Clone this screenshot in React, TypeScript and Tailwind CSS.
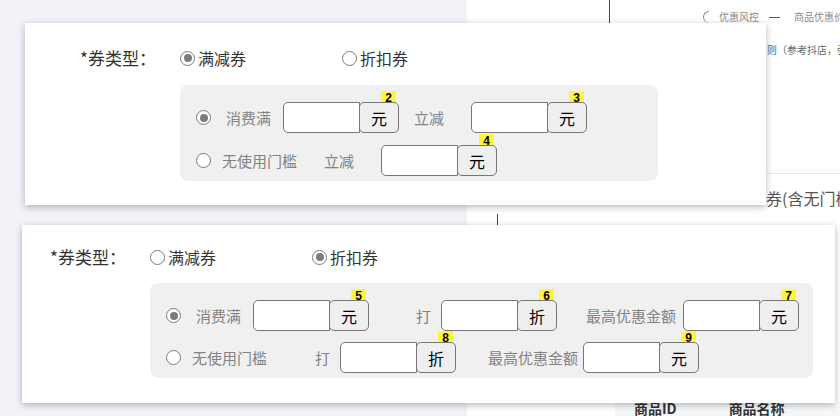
import React from "react";

const CJK = "font-['Noto_Sans_CJK_SC','Noto_Sans',sans-serif]";

function Radio({ on }: { on?: boolean }) {
  return (
    <span className="flex h-[15px] w-[15px] shrink-0 items-center justify-center rounded-full border border-[#7b7b7b] bg-white">
      {on && <span className="h-[8px] w-[8px] rounded-full bg-[#7b7b7b]" />}
    </span>
  );
}

// input + unit button, with the yellow hint tag peeking over the button
function Field({ unit, hint, ml }: { unit: string; hint: string; ml: string }) {
  return (
    <div className={`relative flex h-[31px] shrink-0 ${ml}`}>
      <div className="h-full w-[77px] rounded-l-[5px] border border-[#767676] bg-white" />
      <span className="absolute right-[3px] top-[-11px] z-0 h-[14px] w-[15px] bg-[#fff53c] text-center font-['Liberation_Sans',sans-serif] text-[12px] font-bold leading-[15px] text-black">
        {hint}
      </span>
      <div className="relative z-10 -ml-px flex h-full w-[40px] items-center justify-center rounded-[5px] border border-[#767676] bg-[#efefef] text-[16px] text-black">
        {unit}
      </div>
    </div>
  );
}

function Label({ text, ml }: { text: string; ml: string }) {
  return <span className={`shrink-0 whitespace-nowrap text-[15px] leading-[20px] text-[#838383] ${ml}`}>{text}</span>;
}

function TypeRow({ first, ml, mt }: { first: boolean; ml: string; mt: string }) {
  return (
    <div className={`flex h-[24px] items-center text-[16px] text-[#333] ${mt}`}>
      <span className={`w-[100px] shrink-0 whitespace-nowrap text-[17px] ${ml}`}>*券类型：</span>
      <Radio on={first} />
      <span className="ml-[3px] w-[48px] whitespace-nowrap">满减券</span>
      <span className="ml-[96px]">
        <Radio on={!first} />
      </span>
      <span className="ml-[3px] whitespace-nowrap">折扣券</span>
    </div>
  );
}

function CardOne() {
  return (
    <div className="absolute left-[25px] top-[23px] z-20 h-[182px] w-[741px] bg-white shadow-[0_2px_7px_rgba(0,0,0,0.28)]">
      <TypeRow first ml="ml-[55px]" mt="mt-[23px]" />
      <div className="ml-[155px] mt-[15px] h-[96px] w-[478px] rounded-[8px] bg-[#f0f0f0] pt-[17px]">
        <div className="flex h-[31px] items-center">
          <span className="ml-[16px]"><Radio on /></span>
          <Label text="消费满" ml="ml-[15px]" />
          <Field unit="元" hint="2" ml="ml-[12px]" />
          <Label text="立减" ml="ml-[15px]" />
          <Field unit="元" hint="3" ml="ml-[27px]" />
        </div>
        <div className="mt-[12px] flex h-[31px] items-center">
          <span className="ml-[16px]"><Radio /></span>
          <Label text="无使用门槛" ml="ml-[11px]" />
          <Label text="立减" ml="ml-[27px]" />
          <Field unit="元" hint="4" ml="ml-[27px]" />
        </div>
      </div>
    </div>
  );
}

function CardTwo() {
  return (
    <div className="absolute left-[22px] top-[225px] z-20 h-[178px] w-[813px] bg-white shadow-[0_2px_7px_rgba(0,0,0,0.28)]">
      <TypeRow first={false} ml="ml-[28px]" mt="mt-[20px]" />
      <div className="ml-[128px] mt-[14px] h-[95px] w-[663px] rounded-[8px] bg-[#f0f0f0] pt-[17px]">
        <div className="flex h-[31px] items-center">
          <span className="ml-[16px]"><Radio on /></span>
          <Label text="消费满" ml="ml-[15px]" />
          <Field unit="元" hint="5" ml="ml-[12px]" />
          <Label text="打" ml="ml-[47px]" />
          <Field unit="折" hint="6" ml="ml-[10px]" />
          <Label text="最高优惠金额" ml="ml-[29px]" />
          <Field unit="元" hint="7" ml="ml-[7px]" />
        </div>
        <div className="mt-[11px] flex h-[31px] items-center">
          <span className="ml-[16px]"><Radio /></span>
          <Label text="无使用门槛" ml="ml-[11px]" />
          <Label text="打" ml="ml-[48px]" />
          <Field unit="折" hint="8" ml="ml-[10px]" />
          <Label text="最高优惠金额" ml="ml-[32px]" />
          <Field unit="元" hint="9" ml="ml-[5px]" />
        </div>
      </div>
    </div>
  );
}

export default function App() {
  return (
    <div className={`relative flex h-[416px] w-[840px] overflow-hidden bg-white ${CJK}`}>
      {/* page behind the two floating cards */}
      <aside className="h-full w-[467px] shrink-0 bg-[#f2f3f9]" />
      <main className="flex h-full min-w-0 flex-1 flex-col overflow-hidden">
        <div className="flex h-[40px] shrink-0 items-start">
          <span className="ml-[142px] h-[24px] w-px shrink-0 bg-[#444]" />
          <div className="ml-[93px] mt-[11px] flex shrink-0 items-center text-[10px] leading-[12px] text-[#8a8a8a]">
            <span className="h-[12px] w-[6px] rounded-l-full border-l border-t border-[#888]" />
            <span className="ml-[10px] whitespace-nowrap">优惠风控</span>
            <span className="ml-[10px] h-px w-[11px] bg-[#555]" />
            <span className="ml-[14px] whitespace-nowrap">商品优惠价</span>
          </div>
        </div>
        <div className="ml-[300px] mt-[4px] whitespace-nowrap text-[10px] leading-[12px] text-[#666]">则（参考抖店，强制</div>
        <div className="ml-[300px] mt-[117px] h-px shrink-0 bg-[#e6e6e6]" />
        <div className="ml-[299px] mt-[13px] whitespace-nowrap text-[16px] leading-[22px] text-[#555]">券(含无门槛</div>
        <span className="ml-[30px] mt-[5px] h-[13px] w-px shrink-0 bg-[#444]" />
        <div className="mt-auto ml-[148px] flex h-[14px] shrink-0 items-start bg-[#f6f7f9] text-[14px] font-bold leading-[13px] text-[#333]">
          <span className="ml-[19px] whitespace-nowrap">商品ID</span>
          <span className="ml-[52px] whitespace-nowrap">商品名称</span>
        </div>
      </main>
      <CardOne />
      <CardTwo />
    </div>
  );
}
